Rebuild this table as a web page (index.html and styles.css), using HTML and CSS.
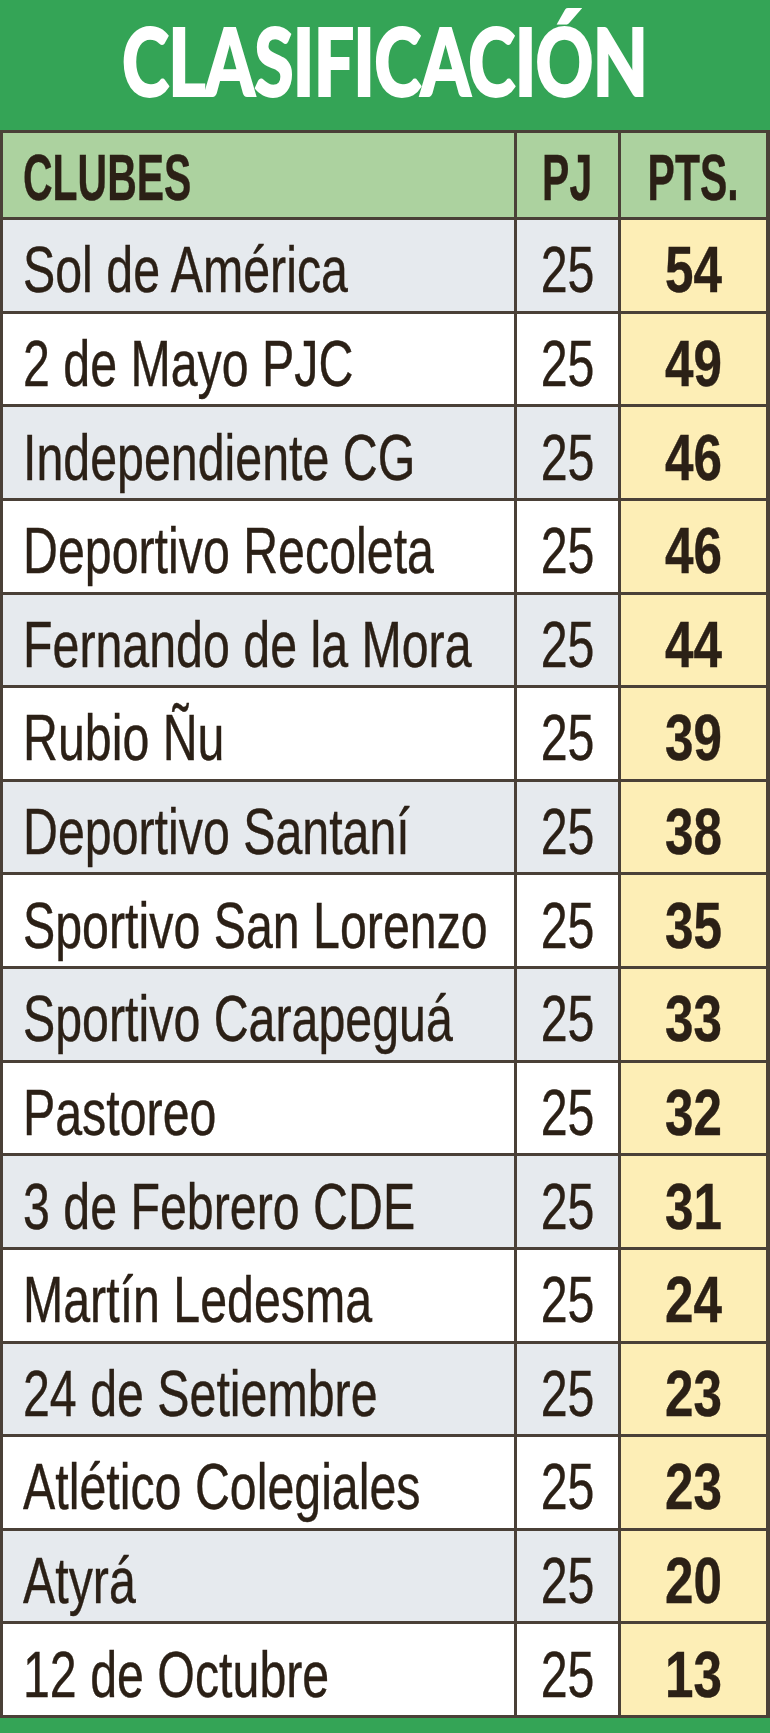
FILE: index.html
```html
<!DOCTYPE html>
<html lang="es">
<head>
<meta charset="utf-8">
<title>Clasificación</title>
<link rel="stylesheet" href="styles.css">
</head>
<body>
<div class="board">
  <div class="title"><span class="title-text">CLASIFICACIÓN</span></div>
  <div class="table">
    <div class="row head">
      <div class="cell club"><span class="t hb">CLUBES</span></div>
      <div class="cell num"><span class="t hb">PJ</span></div>
      <div class="cell num"><span class="t hb">PTS.</span></div>
    </div>
    <div class="row alt"><div class="cell club"><span class="t">Sol de América</span></div><div class="cell num"><span class="t">25</span></div><div class="cell num pts"><span class="t b">54</span></div></div>
    <div class="row"><div class="cell club"><span class="t">2 de Mayo PJC</span></div><div class="cell num"><span class="t">25</span></div><div class="cell num pts"><span class="t b">49</span></div></div>
    <div class="row alt"><div class="cell club"><span class="t">Independiente CG</span></div><div class="cell num"><span class="t">25</span></div><div class="cell num pts"><span class="t b">46</span></div></div>
    <div class="row"><div class="cell club"><span class="t">Deportivo Recoleta</span></div><div class="cell num"><span class="t">25</span></div><div class="cell num pts"><span class="t b">46</span></div></div>
    <div class="row alt"><div class="cell club"><span class="t">Fernando de la Mora</span></div><div class="cell num"><span class="t">25</span></div><div class="cell num pts"><span class="t b">44</span></div></div>
    <div class="row"><div class="cell club"><span class="t">Rubio Ñu</span></div><div class="cell num"><span class="t">25</span></div><div class="cell num pts"><span class="t b">39</span></div></div>
    <div class="row alt"><div class="cell club"><span class="t">Deportivo Santaní</span></div><div class="cell num"><span class="t">25</span></div><div class="cell num pts"><span class="t b">38</span></div></div>
    <div class="row"><div class="cell club"><span class="t">Sportivo San Lorenzo</span></div><div class="cell num"><span class="t">25</span></div><div class="cell num pts"><span class="t b">35</span></div></div>
    <div class="row alt"><div class="cell club"><span class="t">Sportivo Carapeguá</span></div><div class="cell num"><span class="t">25</span></div><div class="cell num pts"><span class="t b">33</span></div></div>
    <div class="row"><div class="cell club"><span class="t">Pastoreo</span></div><div class="cell num"><span class="t">25</span></div><div class="cell num pts"><span class="t b">32</span></div></div>
    <div class="row alt"><div class="cell club"><span class="t">3 de Febrero CDE</span></div><div class="cell num"><span class="t">25</span></div><div class="cell num pts"><span class="t b">31</span></div></div>
    <div class="row"><div class="cell club"><span class="t">Martín Ledesma</span></div><div class="cell num"><span class="t">25</span></div><div class="cell num pts"><span class="t b">24</span></div></div>
    <div class="row alt"><div class="cell club"><span class="t">24 de Setiembre</span></div><div class="cell num"><span class="t">25</span></div><div class="cell num pts"><span class="t b">23</span></div></div>
    <div class="row"><div class="cell club"><span class="t">Atlético Colegiales</span></div><div class="cell num"><span class="t">25</span></div><div class="cell num pts"><span class="t b">23</span></div></div>
    <div class="row alt"><div class="cell club"><span class="t">Atyrá</span></div><div class="cell num"><span class="t">25</span></div><div class="cell num pts"><span class="t b">20</span></div></div>
    <div class="row"><div class="cell club"><span class="t">12 de Octubre</span></div><div class="cell num"><span class="t">25</span></div><div class="cell num pts"><span class="t b">13</span></div></div>
  </div>
</div>
</body>
</html>
```
FILE: styles.css
```css
html, body {
  margin: 0;
  padding: 0;
  background: #ffffff;
}

.board {
  width: 770px;
  background: #34a456;
  padding-bottom: 15px;
}

.title {
  height: 130px;
  box-sizing: border-box;
  padding-top: 13px;
  text-align: center;
  line-height: 93px;
}

.title-text {
  display: inline-block;
  font-family: Lato, "Open Sans", "Liberation Sans", sans-serif;
  font-weight: 900;
  font-size: 94px;
  line-height: 93px;
  color: #ffffff;
  transform: scaleX(0.76);
  transform-origin: center;
  white-space: nowrap;
  letter-spacing: -1px;
  -webkit-text-stroke: 2px #ffffff;
}

.table {
  display: grid;
  row-gap: 3px;
  padding: 3px 4px 3px 3px;
  background: #4a4037;
}

.row {
  display: grid;
  grid-template-columns: 511px 101px 145px;
  column-gap: 3px;
  height: 90.625px;
}

.row.head {
  height: 84px;
}

.cell {
  background: #ffffff;
  display: flex;
  align-items: center;
  box-sizing: border-box;
  padding-top: 10px;
  overflow: visible;
  white-space: nowrap;
  color: #2b2016;
}

.row.alt .cell {
  background: #e6eaee;
}

.cell.pts,
.row.alt .cell.pts {
  background: #fdeeb6;
}

.row.head .cell {
  background: #acd29f;
  padding-top: 6px;
}

.cell.club {
  padding-left: 20px;
}

.cell.num {
  justify-content: center;
}

.t {
  display: inline-block;
  font-family: "Liberation Sans", Arial, sans-serif;
  font-size: 64px;
  line-height: 1;
  transform: scaleX(0.755);
  transform-origin: left center;
  -webkit-text-stroke: 0.4px #2b2016;
}

.cell.num .t {
  transform-origin: center;
}

.t.b {
  font-weight: 700;
  transform: scaleX(0.8);
}

.t.hb {
  font-weight: 700;
  transform: scaleX(0.64);
}
```
